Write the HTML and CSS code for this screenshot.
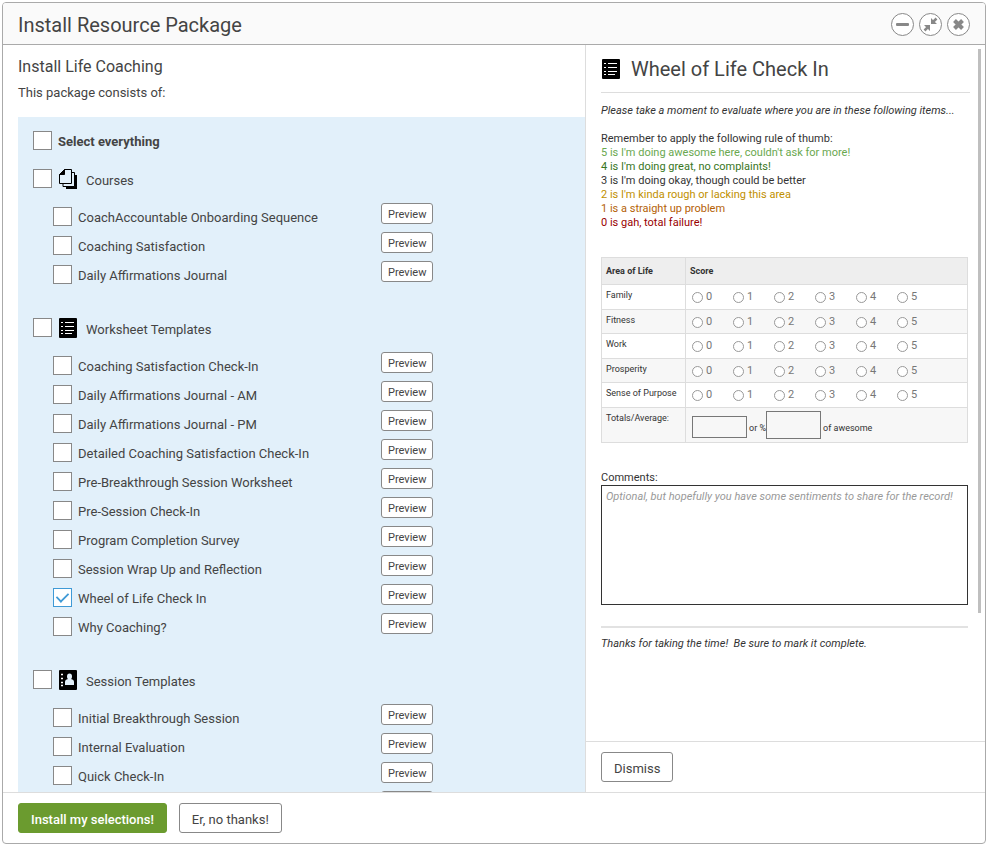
FILE: index.html
```html
<!DOCTYPE html>
<html lang="en">
<head>
  <meta charset="UTF-8">
  <meta name="viewport" content="width=device-width, initial-scale=1.0">
  <title>Install Resource Package</title>
  <link rel="stylesheet" href="styles.css">
</head>
<body>

  <!-- Shared icons -->
  <svg class="icon-defs" aria-hidden="true">
    <symbol id="icon-courses" viewBox="0 0 18 20">
      <path d="M15 6H18V20H7V17H15z" fill="#000"/>
      <path d="M4 14V17.500H15.500V3.500H12" fill="#e2f0fa" stroke="#000"/>
      <path d="M5.500 .5H12.500V14.500H.5V5.500z" fill="#e2f0fa" stroke="#000"/>
      <path d="M5.500 .5V5.500H.5z" fill="#000" stroke="#000"/>
    </symbol>
    <symbol id="icon-worksheet" viewBox="0 0 18 20">
      <rect width="18" height="20" rx="1" fill="#000"/>
      <path d="M6 4.500H15M6 8.500H15M6 12.500H15M6 15.500H13" stroke="#fff" stroke-width="1"/>
      <path d="M2 4.500H4M2 8.500H4M2 12.500H4M2 15.500H4" stroke="#fff" stroke-width="1"/>
    </symbol>
    <symbol id="icon-session" viewBox="0 0 18 20">
      <rect width="18" height="20" rx="1" fill="#000"/>
      <path d="M2 4.500H4M2 8.500H4M2 12.500H4M2 15.500H4" stroke="#fff" stroke-width="1.500"/>
      <ellipse cx="10.500" cy="6.500" rx="2.500" ry="3" fill="#e2f0fa"/>
      <path d="M6 15V12Q6 9.500 9 9H12Q15 9.500 15 12V15z" fill="#e2f0fa"/>
    </symbol>
  </svg>

  <div class="window">
    <header class="window-header">
      <h1>Install Resource Package</h1>
      <div class="window-controls">
        <button class="round-btn" aria-label="Minimize">
          <svg viewBox="0 0 23 23"><rect x="5" y="10" width="13" height="3" rx="1" fill="#888"/></svg>
        </button>
        <button class="round-btn" aria-label="Shrink">
          <svg viewBox="0 0 23 23">
            <path d="M12 5V11H18L12 5zM11 18V12H5L11 18z" fill="#888"/>
            <path d="M13 10L17.500 5.500M10 13L5.500 17.500" stroke="#888" stroke-width="2.500"/>
          </svg>
        </button>
        <button class="round-btn" aria-label="Close">
          <svg viewBox="0 0 23 23"><path d="M7.500 7.500L15.500 15.500M15.500 7.500L7.500 15.500" stroke="#888" stroke-width="4"/></svg>
        </button>
      </div>
    </header>

    <div class="window-body">
      <main class="package">
        <h2>Install Life Coaching</h2>
        <p class="package-intro">This package consists of:</p>

        <div class="package-list">
          <label class="check select-all"><input type="checkbox"> <span>Select everything</span></label>

          <section class="group">
            <label class="check group-title">
              <input type="checkbox">
              <svg class="group-icon"><use href="#icon-courses"/></svg>
              <span>Courses</span>
            </label>
            <ul>
              <li><label class="check"><input type="checkbox"> <span>CoachAccountable Onboarding Sequence</span></label><button class="preview-btn">Preview</button></li>
              <li><label class="check"><input type="checkbox"> <span>Coaching Satisfaction</span></label><button class="preview-btn">Preview</button></li>
              <li><label class="check"><input type="checkbox"> <span>Daily Affirmations Journal</span></label><button class="preview-btn">Preview</button></li>
            </ul>
          </section>

          <section class="group">
            <label class="check group-title">
              <input type="checkbox">
              <svg class="group-icon"><use href="#icon-worksheet"/></svg>
              <span>Worksheet Templates</span>
            </label>
            <ul>
              <li><label class="check"><input type="checkbox"> <span>Coaching Satisfaction Check-In</span></label><button class="preview-btn">Preview</button></li>
              <li><label class="check"><input type="checkbox"> <span>Daily Affirmations Journal - AM</span></label><button class="preview-btn">Preview</button></li>
              <li><label class="check"><input type="checkbox"> <span>Daily Affirmations Journal - PM</span></label><button class="preview-btn">Preview</button></li>
              <li><label class="check"><input type="checkbox"> <span>Detailed Coaching Satisfaction Check-In</span></label><button class="preview-btn">Preview</button></li>
              <li><label class="check"><input type="checkbox"> <span>Pre-Breakthrough Session Worksheet</span></label><button class="preview-btn">Preview</button></li>
              <li><label class="check"><input type="checkbox"> <span>Pre-Session Check-In</span></label><button class="preview-btn">Preview</button></li>
              <li><label class="check"><input type="checkbox"> <span>Program Completion Survey</span></label><button class="preview-btn">Preview</button></li>
              <li><label class="check"><input type="checkbox"> <span>Session Wrap Up and Reflection</span></label><button class="preview-btn">Preview</button></li>
              <li><label class="check"><input type="checkbox" checked> <span>Wheel of Life Check In</span></label><button class="preview-btn">Preview</button></li>
              <li><label class="check"><input type="checkbox"> <span>Why Coaching?</span></label><button class="preview-btn">Preview</button></li>
            </ul>
          </section>

          <section class="group">
            <label class="check group-title">
              <input type="checkbox">
              <svg class="group-icon"><use href="#icon-session"/></svg>
              <span>Session Templates</span>
            </label>
            <ul>
              <li><label class="check"><input type="checkbox"> <span>Initial Breakthrough Session</span></label><button class="preview-btn">Preview</button></li>
              <li><label class="check"><input type="checkbox"> <span>Internal Evaluation</span></label><button class="preview-btn">Preview</button></li>
              <li><label class="check"><input type="checkbox"> <span>Quick Check-In</span></label><button class="preview-btn">Preview</button></li>
              <li><label class="check"><input type="checkbox"> <span>Session Notes</span></label><button class="preview-btn">Preview</button></li>
            </ul>
          </section>
        </div>
      </main>

      <aside class="preview">
        <div class="preview-content">
          <h2 class="preview-title">
            <svg class="group-icon"><use href="#icon-worksheet"/></svg>
            Wheel of Life Check In
          </h2>

          <div class="worksheet">
            <p><em>Please take a moment to evaluate where you are in these following items...</em></p>
            <p>
              Remember to apply the following rule of thumb:<br>
              <span class="score-5">5 is I'm doing awesome here, couldn't ask for more!</span><br>
              <span class="score-4">4 is I'm doing great, no complaints!</span><br>
              3 is I'm doing okay, though could be better<br>
              <span class="score-2">2 is I'm kinda rough or lacking this area</span><br>
              <span class="score-1">1 is a straight up problem</span><br>
              <span class="score-0">0 is gah, total failure!</span>
            </p>

            <table class="scores">
              <thead>
                <tr><th class="area">Area of Life</th><th>Score</th></tr>
              </thead>
              <tbody>
                <tr>
                  <td>Family</td>
                  <td><div class="radios">
                    <label><input type="radio" name="family">0</label>
                    <label><input type="radio" name="family">1</label>
                    <label><input type="radio" name="family">2</label>
                    <label><input type="radio" name="family">3</label>
                    <label><input type="radio" name="family">4</label>
                    <label><input type="radio" name="family">5</label>
                  </div></td>
                </tr>
                <tr>
                  <td>Fitness</td>
                  <td><div class="radios">
                    <label><input type="radio" name="fitness">0</label>
                    <label><input type="radio" name="fitness">1</label>
                    <label><input type="radio" name="fitness">2</label>
                    <label><input type="radio" name="fitness">3</label>
                    <label><input type="radio" name="fitness">4</label>
                    <label><input type="radio" name="fitness">5</label>
                  </div></td>
                </tr>
                <tr>
                  <td>Work</td>
                  <td><div class="radios">
                    <label><input type="radio" name="work">0</label>
                    <label><input type="radio" name="work">1</label>
                    <label><input type="radio" name="work">2</label>
                    <label><input type="radio" name="work">3</label>
                    <label><input type="radio" name="work">4</label>
                    <label><input type="radio" name="work">5</label>
                  </div></td>
                </tr>
                <tr>
                  <td>Prosperity</td>
                  <td><div class="radios">
                    <label><input type="radio" name="prosperity">0</label>
                    <label><input type="radio" name="prosperity">1</label>
                    <label><input type="radio" name="prosperity">2</label>
                    <label><input type="radio" name="prosperity">3</label>
                    <label><input type="radio" name="prosperity">4</label>
                    <label><input type="radio" name="prosperity">5</label>
                  </div></td>
                </tr>
                <tr>
                  <td>Sense of Purpose</td>
                  <td><div class="radios">
                    <label><input type="radio" name="purpose">0</label>
                    <label><input type="radio" name="purpose">1</label>
                    <label><input type="radio" name="purpose">2</label>
                    <label><input type="radio" name="purpose">3</label>
                    <label><input type="radio" name="purpose">4</label>
                    <label><input type="radio" name="purpose">5</label>
                  </div></td>
                </tr>
                <tr class="totals">
                  <td><label for="total">Totals/Average:</label></td>
                  <td><div class="total-fields">
                    <input type="text" id="total">
                    <label for="percent">or %</label>
                    <input type="text" id="percent" class="tall">
                    <span>of awesome</span>
                  </div></td>
                </tr>
              </tbody>
            </table>

            <label class="comments-label" for="comments">Comments:</label>
            <textarea id="comments" placeholder="Optional, but hopefully you have some sentiments to share for the record!"></textarea>
            <hr>
            <p><em>Thanks for taking the time!&nbsp; Be sure to mark it complete.</em></p>
          </div>
          <div class="scroll-thumb"></div>
        </div>
        <div class="preview-footer">
          <button class="btn">Dismiss</button>
        </div>
      </aside>
    </div>

    <footer class="window-footer">
      <button class="btn btn-primary">Install my selections!</button>
      <button class="btn">Er, no thanks!</button>
    </footer>
  </div>

</body>
</html>
```

FILE: styles.css
```css
* {
  box-sizing: border-box;
}
body {
  margin: 0;
  padding: 2px 4px 4px 2px;
  height: 100vh;
  background: #fff;
  color: #444;
  font-family: Roboto, Arial, sans-serif;
  font-size: 13px;
}
button, input, textarea {
  font-family: inherit;
  color: inherit;
  margin: 0;
}
h1, h2, p, ul {
  margin: 0;
  padding: 0;
  font-weight: normal;
}
.icon-defs {
  display: none;
}

/* Window frame */
.window {
  display: flex;
  flex-direction: column;
  height: 100%;
  border: 1px solid #aaa;
  border-radius: 4px;
  overflow: hidden;
}
.window-header {
  display: flex;
  justify-content: space-between;
  align-items: center;
  height: 42px;
  padding: 2px 15px 0;
  background: #fafafa;
  border-bottom: 1px solid #aaa;
}
.window-header h1 {
  font-size: 20px;
}
.window-controls {
  display: flex;
  gap: 5px;
}
.round-btn {
  width: 23px;
  height: 23px;
  padding: 0;
  border: 1px solid #888;
  border-radius: 50%;
  background: #fff;
  cursor: pointer;
}
.round-btn svg {
  display: block;
  width: 23px;
  height: 23px;
  margin: -1px;
}
.window-body {
  display: flex;
  flex: 1;
  min-height: 0;
}
.window-footer {
  display: flex;
  gap: 12px;
  padding: 10px 15px;
  border-top: 1px solid #ddd;
}
.btn {
  height: 30px;
  padding: 2px 12px 0;
  border: 1px solid #888;
  border-radius: 3px;
  background: #fff;
  font-size: 13px;
  cursor: pointer;
}
.btn-primary {
  border-color: #6b9b2f;
  background: #6b9b2f;
  color: #fff;
  font-weight: 500;
}

/* Package contents */
.package {
  flex: 1;
  min-width: 0;
  overflow: hidden;
  padding: 12px 0 0 15px;
}
.package h2 {
  font-size: 16px;
  line-height: 20px;
}
.package-intro {
  margin: 6px 0 15px;
  line-height: 19px;
}
.package-list {
  padding: 14px 15px;
  background: #e2f0fa;
}
.check {
  display: flex;
  align-items: center;
  gap: 6px;
  height: 19px;
}
.check span {
  padding-top: 2px;
}
.check input {
  appearance: none;
  display: grid;
  place-items: center;
  width: 19px;
  height: 19px;
  border: 1px solid #888;
  background: #fff;
}
.check input:checked {
  border-color: #3f9ad6;
}
.check input:checked::before {
  content: "";
  width: 11px;
  height: 6px;
  margin-bottom: 3px;
  border-left: 2px solid #3f9ad6;
  border-bottom: 2px solid #3f9ad6;
  transform: rotate(-45deg) scale(0.9);
}
.select-all {
  margin-bottom: 19px;
  font-weight: bold;
}
.group {
  margin-bottom: 28px;
}
.group-title {
  gap: 7px;
  margin-bottom: 15px;
}
.group-title span {
  padding-top: 4px;
}
.group-icon {
  width: 18px;
  height: 20px;
  margin-right: 2px;
}
.group ul {
  list-style: none;
  padding-left: 20px;
}
.group li {
  display: grid;
  grid-template-columns: 328px auto;
  align-items: start;
  justify-content: start;
  height: 29px;
}
.group li .check {
  margin-top: 4px;
}
.preview-btn {
  height: 21px;
  padding: 1px 6px 0;
  border: 1px solid #888;
  border-radius: 3px;
  background: #fff;
  font-size: 11px;
  cursor: pointer;
}

/* Preview pane */
.preview {
  display: flex;
  flex-direction: column;
  flex: 0 0 400px;
  border-left: 1px solid #ddd;
}
.preview-content {
  position: relative;
  flex: 1;
  min-height: 0;
  overflow: hidden;
  padding: 0 15px;
}
.preview-title {
  display: flex;
  align-items: center;
  gap: 9px;
  height: 48px;
  padding-left: 1px;
  border-bottom: 1px solid #ddd;
  font-size: 20px;
}
.scroll-thumb {
  position: absolute;
  top: 4px;
  right: 4px;
  width: 3px;
  height: 81%;
  background: #bfbfbf;
}
.preview-footer {
  padding: 10px 15px;
  border-top: 1px solid #ddd;
}
.worksheet {
  padding: 11px 2px 0 0;
  font-size: 11px;
  line-height: 14px;
  color: #333;
}
.worksheet p {
  margin-bottom: 14px;
}
.score-5 { color: #6aa84f; }
.score-4 { color: #38761d; }
.score-2 { color: #bf9000; }
.score-1 { color: #b45f06; }
.score-0 { color: #990000; }

.scores {
  width: 100%;
  margin: 27px 0 28px;
  border-collapse: collapse;
  font-size: 9px;
  line-height: 12px;
}
.scores th, .scores td {
  height: 25px;
  padding: 4px;
  border: 1px solid #ddd;
  text-align: left;
  vertical-align: top;
}
.scores th {
  height: 27px;
  background: #eee;
  vertical-align: middle;
}
.scores .area {
  width: 84px;
}
.scores tr:nth-child(even) td {
  height: 24px;
  background: #f7f7f7;
}
.radios {
  display: flex;
  padding: 2px 0 0 2px;
}
.radios label {
  display: flex;
  align-items: center;
  gap: 3px;
  width: 41px;
  font-size: 11px;
  color: #777;
}
.radios input {
  appearance: none;
  width: 11px;
  height: 11px;
  border: 1px solid #999;
  border-radius: 50%;
  background: #fff;
}
.scores .totals td:last-child {
  padding: 3px;
}
.total-fields {
  display: flex;
  align-items: end;
  gap: 2px;
  padding-left: 3px;
}
.total-fields input {
  width: 55px;
  height: 22px;
  margin-bottom: 1px;
  border: 1px solid #777;
  background: #f7f7f7;
}
.total-fields .tall {
  height: 28px;
  margin: 0 0 0 -2px;
}
.total-fields label, .total-fields span {
  padding-bottom: 5px;
}
.comments-label {
  display: block;
}
.worksheet textarea {
  display: block;
  width: 100%;
  height: 120px;
  padding: 4px;
  border: 1px solid #333;
  font-size: 11px;
  line-height: 14px;
  resize: none;
}
.worksheet textarea::placeholder {
  color: #999;
  font-style: italic;
}
.worksheet hr {
  margin: 21px 0 9px;
  border: 0;
  border-top: 2px solid #e2e2e2;
}
```
